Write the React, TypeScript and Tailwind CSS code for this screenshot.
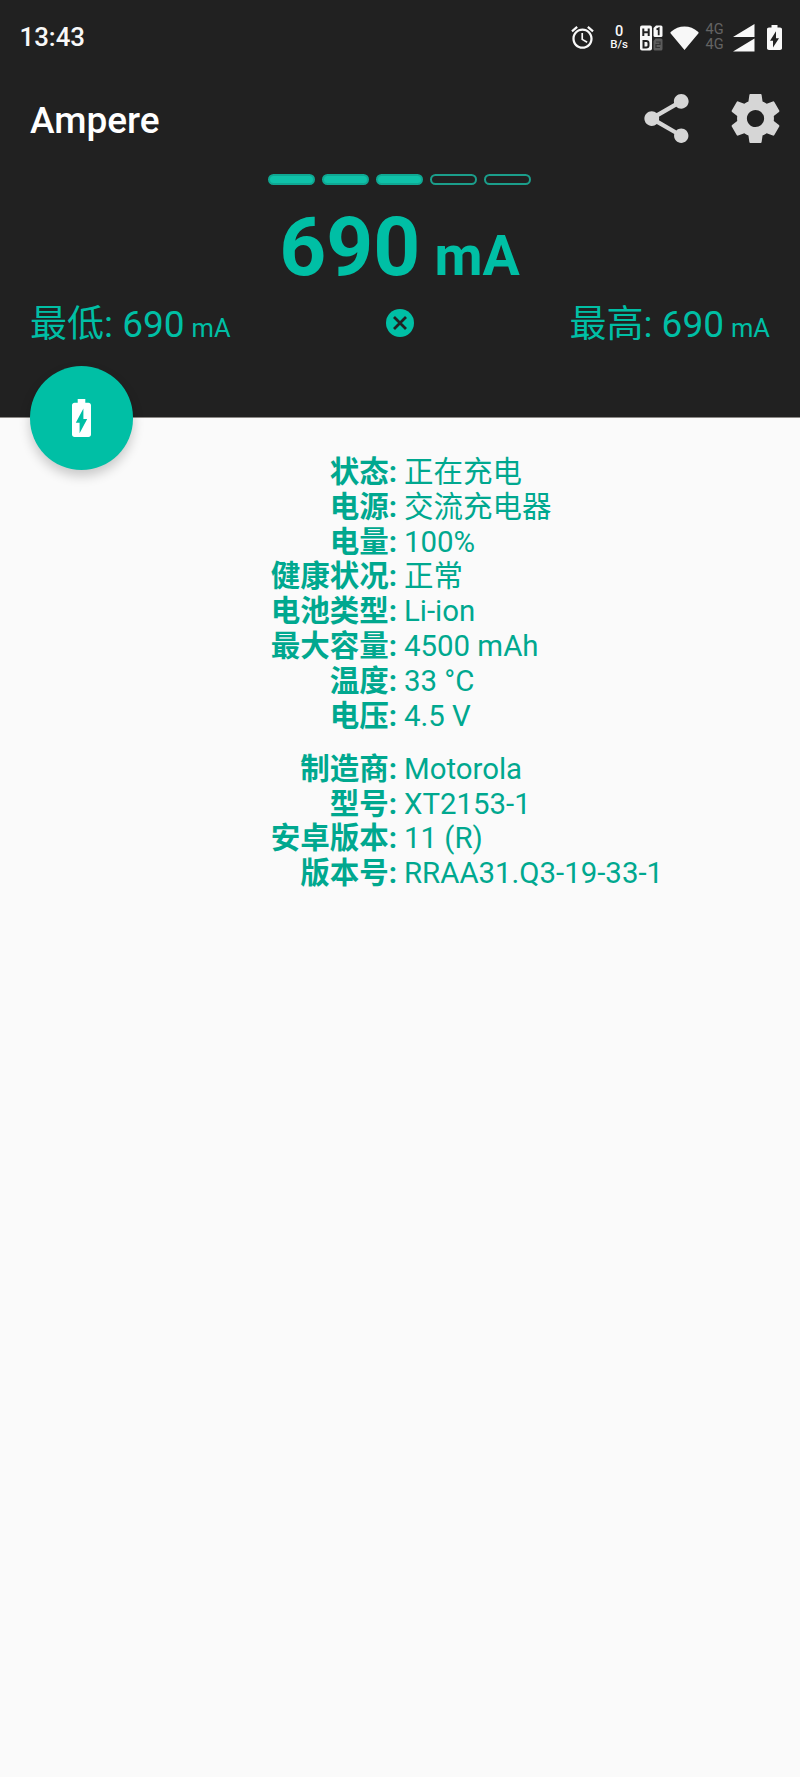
import React from "react";

const battery = "M15.67 4H14V2h-4v2H8.33C7.6 4 7 4.6 7 5.33v15.33C7 21.4 7.6 22 8.33 22h7.33c.74 0 1.34-.6 1.34-1.33V5.33C17 4.6 16.4 4 15.67 4zM11 20v-5.5H9L13 7v5.5h2L11 20z";

const status: [string, string][] = [
  ["状态:", "正在充电"],
  ["电源:", "交流充电器"],
  ["电量:", "100%"],
  ["健康状况:", "正常"],
  ["电池类型:", "Li-ion"],
  ["最大容量:", "4500 mAh"],
  ["温度:", "33 °C"],
  ["电压:", "4.5 V"],
];

const device: [string, string][] = [
  ["制造商:", "Motorola"],
  ["型号:", "XT2153-1"],
  ["安卓版本:", "11 (R)"],
  ["版本号:", "RRAA31.Q3-19-33-1"],
];

function Rows({ items }: { items: [string, string][] }) {
  return (
    <dl>
      {items.map(([label, value]) => (
        <div key={label} className="flex h-[34.8px] items-baseline gap-[7px] text-[29.5px] leading-[34.8px] whitespace-nowrap">
          <dt className="w-[397px] text-right font-bold">{label}</dt>
          <dd className={/^[\x20-\xff]+$/.test(value) ? "text-[29.4px]" : ""}>{value}</dd>
        </div>
      ))}
    </dl>
  );
}

function Extreme({ label }: { label: string }) {
  return (
    <p className="flex items-baseline gap-[7px] pt-[7px] text-[37px] leading-[56px]">
      <span>{label}: 690</span>
      <span className="text-[25.5px]">mA</span>
    </p>
  );
}

function StatusBar() {
  return (
    <div className="flex h-[75px] items-center justify-between pr-[18px] pl-[19.5px] text-[#f8f8f8]">
      <span className="text-[25.8px] font-medium">13:43</span>
      <div className="flex items-center">
        <svg className="mr-[14px] h-[27px] w-[27px]" viewBox="0 0 24 24" fill="currentColor">
          <path d="M22 5.72l-4.6-3.86-1.29 1.53 4.6 3.86L22 5.72zM7.88 3.39L6.6 1.86 2 5.71l1.29 1.53 4.59-3.85zM12.5 8H11v6l4.75 2.85.75-1.23-4-2.37V8zM12 4c-4.97 0-9 4.03-9 9s4.02 9 9 9c4.97 0 9-4.03 9-9s-4.03-9-9-9zm0 16c-3.87 0-7-3.13-7-7s3.13-7 7-7 7 3.13 7 7-3.13 7-7 7z" />
        </svg>
        <div className="mr-[11px] flex w-[18px] flex-col items-center font-medium">
          <span className="text-[14.5px] leading-[13px]">0</span>
          <span className="text-[11.5px] leading-[13px]">B/s</span>
        </div>
        <svg className="mr-[7px] h-[26px] w-[24px]" viewBox="0 0 24 26" fill="none">
          <rect x="1" y="0.5" width="12" height="25" rx="2" fill="#f8f8f8" />
          <path d="M4.3 3.5v7.5M9.700 3.500v7.500M4.300 7.200h5.400" stroke="#212121" strokeWidth="2" />
          <path d="M4.500 16h2.700q2.300 0 2.300 2v2.500q0 2-2.300 2H4.500z" stroke="#212121" strokeWidth="2" />
          <path d="M17 0.500h5q1.500 0 1.500 1.500v8.500q0 1.500-1.500 1.500h-6q-1.500 0-1.500-1.500V3z" fill="#f8f8f8" />
          <path d="M17.500 4.500l2.200-1.200v7" stroke="#212121" strokeWidth="1.800" />
          <path d="M16.500 13.500H22q1.500 0 1.500 1.500v9q0 1.500-1.500 1.500h-6q-1.500 0-1.500-1.500v-8z" fill="#5c5c5c" />
          <path d="M17 17h4v2.500h-4v3h4" stroke="#333" strokeWidth="1.200" />
        </svg>
        <svg className="mr-[6px] h-[24px] w-[29px]" viewBox="0 0 29 24" fill="currentColor">
          <path d="M14.500 24L0.500 7.200Q0 6.500 1 5.800Q7 0.500 14.500 0.500T28 5.800Q29 6.500 28.500 7.200z" />
        </svg>
        <div className="mr-[9px] flex w-[19px] flex-col items-center text-[14.5px] leading-[14.500px] text-[#646464]">
          <span>4G</span>
          <span>4G</span>
        </div>
        <svg className="mr-[12px] h-[28px] w-[22px]" viewBox="0 0 22 28" fill="currentColor">
          <path d="M0 13L21.500 0v13zM0 27.500L21.500 14.500v13z" />
        </svg>
        <svg className="h-[25px] w-[15px]" viewBox="7 2 10 20" preserveAspectRatio="none" fill="currentColor">
          <path d={battery} />
        </svg>
      </div>
    </div>
  );
}

export default function App() {
  return (
    <div className="min-h-[1777px] w-[800px] bg-[#fafafa] font-[Roboto,'Noto_Sans_CJK_SC',sans-serif]">
      <header className="relative h-[418px] border-b border-[#8c8986] bg-[#212121] text-[#00bfa5]">
        <StatusBar />
        <div className="flex h-[89px] items-center justify-between pr-[15px] pl-[30px]">
          <h1 className="pt-[2px] text-[37px] font-medium text-white">Ampere</h1>
          <div className="flex items-center gap-[30px] pb-[2px] text-[#d6d6d6]">
            <svg className="h-[59px] w-[59px]" viewBox="0 0 24 24" fill="currentColor">
              <path d="M18 16.080c-.76 0-1.440.3-1.960.770L8.910 12.700c.05-.23.09-.46.09-.7s-.04-.47-.09-.7l7.050-4.110c.54.5 1.250.81 2.040.81 1.660 0 3-1.340 3-3s-1.340-3-3-3-3 1.340-3 3c0 .24.04.47.09.7L8.040 9.810C7.500 9.310 6.790 9 6 9c-1.660 0-3 1.340-3 3s1.340 3 3 3c.79 0 1.500-.31 2.040-.81l7.120 4.160c-.05.21-.08.43-.08.65 0 1.610 1.310 2.920 2.920 2.920s2.920-1.310 2.920-2.920-1.310-2.920-2.920-2.920z" />
            </svg>
            <svg className="h-[59px] w-[59px]" viewBox="0 0 24 24" fill="currentColor">
              <path d="M19.430 12.980c.04-.32.07-.64.07-.98s-.03-.66-.07-.98l2.110-1.650c.19-.15.24-.42.12-.64l-2-3.460c-.12-.22-.39-.3-.61-.22l-2.490 1c-.52-.4-1.080-.73-1.690-.98l-.38-2.650C14.460 2.180 14.250 2 14 2h-4c-.25 0-.46.18-.49.42l-.38 2.650c-.61.25-1.170.59-1.690.98l-2.490-1c-.23-.09-.49 0-.61.22l-2 3.460c-.13.22-.07.49.12.64l2.110 1.650c-.04.32-.07.65-.07.98s.03.66.07.98l-2.110 1.650c-.19.15-.24.42-.12.64l2 3.460c.12.22.39.3.61.22l2.490-1c.52.4 1.080.73 1.690.98l.38 2.650c.03.24.24.42.49.42h4c.25 0 .46-.18.49-.42l.38-2.650c.61-.25 1.170-.59 1.690-.98l2.490 1c.23.09.49 0 .61-.22l2-3.460c.12-.22.07-.49-.12-.64l-2.110-1.650zM12 15.500c-1.930 0-3.500-1.570-3.500-3.500s1.570-3.500 3.500-3.500 3.500 1.570 3.500 3.500-1.570 3.500-3.500 3.500z" />
            </svg>
          </div>
        </div>
        <div className="mt-[10px] flex justify-center gap-[7px] pr-[2px]">
          {[true, true, true, false, false].map((on, i) => (
            <span key={i} className={on ? "h-[11px] w-[47px] rounded-full border-2 border-[#0fa893] bg-[#0fc2a9]" : "h-[11px] w-[47px] rounded-full border-2 border-[#1b9e8b]"} />
          ))}
        </div>
        <div className="flex h-[110px] items-baseline justify-center gap-[14px] pt-[14px] pr-px leading-[96px] font-bold">
          <span className="text-[82px]">690</span>
          <span className="text-[55.500px]">mA</span>
        </div>
        <div className="flex h-[56px] items-center justify-between px-[30px]">
          <Extreme label="最低" />
          <svg className="mr-px h-[28px] w-[28px]" viewBox="0 0 28 28">
            <circle cx="14" cy="14" r="14" fill="#00bfa5" />
            <path d="M8 8l12 12M20 8l-12 12" stroke="#212121" strokeWidth="2.800" />
          </svg>
          <Extreme label="最高" />
        </div>
        <button className="absolute top-[366px] left-[29.500px] flex h-[103.500px] w-[103.500px] items-center justify-center rounded-full bg-[#00bfa5] text-white shadow-[0_6px_12px_rgba(0,0,0,0.2)]">
          <svg className="h-[38px] w-[19px]" viewBox="7 2 10 20" fill="currentColor">
            <path d={battery} />
          </svg>
        </button>
      </header>
      <main className="flex flex-col gap-[18.500px] pt-[37px] text-[#00a88f]">
        <Rows items={status} />
        <Rows items={device} />
      </main>
    </div>
  );
}
